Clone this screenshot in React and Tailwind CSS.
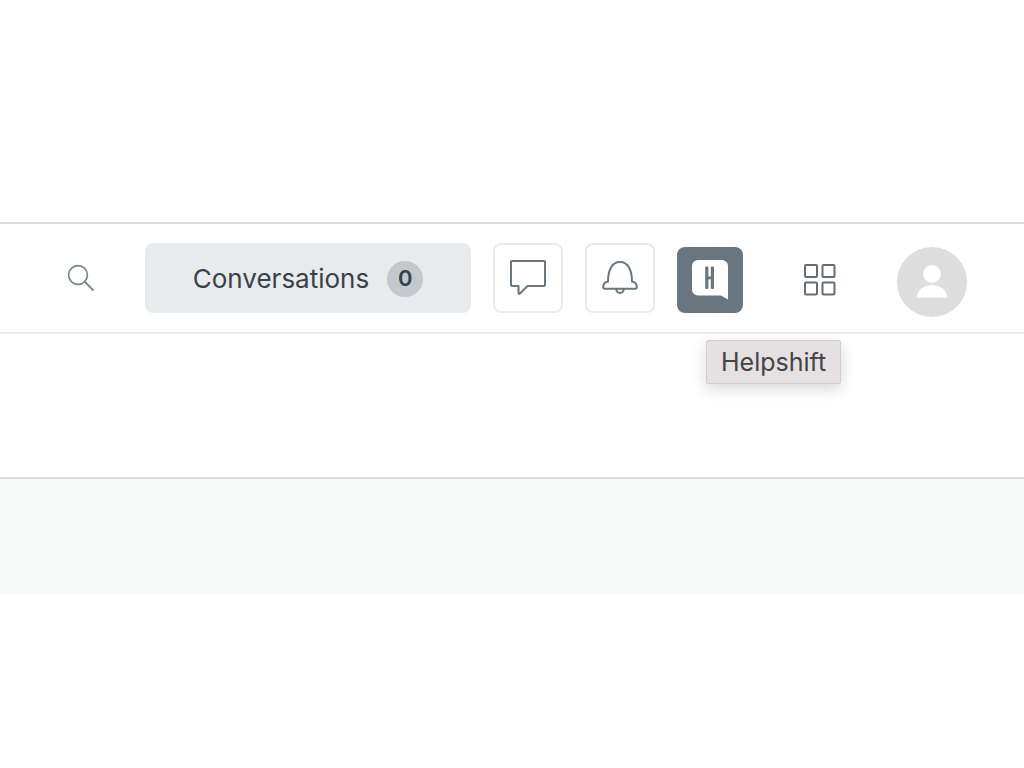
import React from "react";

const iconButton =
  "flex h-[70px] w-[70px] shrink-0 items-center justify-center rounded-lg border-2 border-[#eaecec] bg-white text-[#69757f]";

function SearchIcon() {
  return (
    <svg width="28" height="28" viewBox="0 0 28 28" fill="none" stroke="currentColor" strokeWidth="1.7" aria-hidden="true">
      <circle cx="11" cy="11" r="9.4" />
      <path d="M17.8 17.8 26.6 26.6" strokeWidth="2" />
    </svg>
  );
}

function ChatIcon() {
  return (
    <svg width="36" height="36" viewBox="0 0 36 36" fill="none" stroke="currentColor" strokeWidth="2" strokeLinejoin="round" aria-hidden="true">
      <path d="M2 1H34a1 1 0 0 1 1 1V25a1 1 0 0 1-1 1H17.500L10 33.500Q8.500 34.500 8.500 32.500V26H2a1 1 0 0 1-1-1V2a1 1 0 0 1 1-1Z" />
    </svg>
  );
}

function BellIcon() {
  return (
    <svg width="36" height="34" viewBox="0 0 36 34" fill="none" stroke="currentColor" strokeWidth="2" strokeLinejoin="round" aria-hidden="true">
      <path d="M6 20.500C6 9 10 1 18 1S30 9 30 20.500Q34.800 21.500 34.800 26Q34.800 27.700 33.300 27.700H2.700Q1.200 27.700 1.200 26Q1.200 21.500 6 20.500Z" />
      <path d="M14.300 28a3.700 4 0 0 0 7.400 0" />
    </svg>
  );
}

function HelpshiftLogo() {
  return (
    <svg width="36" height="40" viewBox="0 0 36 40" aria-hidden="true">
      <path d="M6 0H30a6 6 0 0 1 6 6V39.500L29 35.500H6a6 6 0 0 1-6-6V6a6 6 0 0 1 6-6Z" fill="#fff" />
      <rect x="13.200" y="6.500" width="3.200" height="22.500" rx="1" fill="#69757f" />
      <rect x="18.800" y="6.500" width="3.200" height="22.500" rx="1" fill="#69757f" />
      <rect x="15.500" y="16.500" width="4" height="2.800" fill="#69757f" />
    </svg>
  );
}

function AppsIcon() {
  return (
    <svg width="32" height="32" viewBox="0 0 32 32" fill="none" stroke="currentColor" strokeWidth="2" aria-hidden="true">
      <rect x="1" y="1" width="12" height="12" rx="1" />
      <rect x="18.500" y="1" width="12" height="12" rx="1" />
      <rect x="1" y="18.500" width="12" height="12" rx="1" />
      <rect x="18.500" y="18.500" width="12" height="12" rx="1" />
    </svg>
  );
}

function AvatarIcon() {
  return (
    <svg width="70" height="70" viewBox="0 0 70 70" aria-hidden="true">
      <circle cx="35" cy="35" r="35" fill="#dddddd" />
      <circle cx="35" cy="27" r="9" fill="#fff" />
      <path d="M19.500 50.500C20.500 43 26.500 38 35 38S49.500 43 50.500 50.500Z" fill="#fff" />
    </svg>
  );
}

export default function App() {
  return (
    <div className="min-h-screen bg-white pt-[222px] font-['Inter',sans-serif]">
      <header className="flex items-start gap-[22px] border-t-2 border-b-2 border-t-[#dadddd] border-b-[#e9ebed] px-[57px] pt-[19px] pb-[15px]">
        <div className="flex flex-1 gap-10">
          <button type="button" aria-label="Search" className="flex h-[70px] w-12 shrink-0 items-center justify-center text-[#7b868f]">
            <SearchIcon />
          </button>
          <button type="button" className="flex h-[70px] flex-1 items-center justify-center gap-[18px] rounded-lg bg-[#e9eaeb] pt-px text-[26px] text-[#36424c]">
            <span>Conversations</span>
            <span className="flex h-9 w-9 items-center justify-center rounded-full bg-[#c3c8cc] text-[22px] font-semibold">0</span>
          </button>
        </div>
        <button type="button" aria-label="Messages" className={iconButton}>
          <ChatIcon />
        </button>
        <button type="button" aria-label="Notifications" className={iconButton}>
          <BellIcon />
        </button>

        <div className="flex items-start gap-[45px] pt-1">
          <div className="relative">
            <button
              type="button"
              aria-describedby="helpshift-tip"
              aria-label="Helpshift"
              className="flex h-[66px] w-[66px] items-center justify-center rounded-lg bg-[#69757f]"
            >
              <HelpshiftLogo />
            </button>
            <div
              id="helpshift-tip"
              role="tooltip"
              className="absolute top-[93px] left-[29px] rounded-xs border border-[#d2cecf] bg-[#e5e0e1] px-3.5 py-1.5 text-[25px] leading-[30px] text-[#464445] shadow-[0_5px_16px_rgba(0,0,0,0.16)]"
            >
              Helpshift
            </div>
          </div>
          <button type="button" aria-label="Apps" className="flex h-[66px] w-16 items-center justify-center text-[#626e77]">
            <AppsIcon />
          </button>
          <button type="button" aria-label="Account" className="rounded-full">
            <AvatarIcon />
          </button>
        </div>
      </header>
      <main className="pt-[143px]">
        <section className="h-[117px] border-t-2 border-[#dcdce0] bg-[#f8faf9]" />
      </main>
    </div>
  );
}
